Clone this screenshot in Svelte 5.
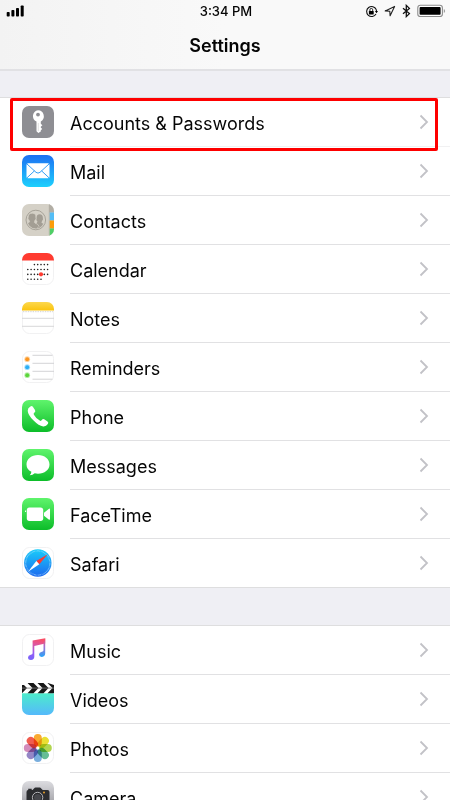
<script lang="ts">
  interface Item {
    id: string;
    label: string;
    highlighted?: boolean;
  }

  const groups: Item[][] = [
    [
      { id: 'accounts', label: 'Accounts & Passwords', highlighted: true },
      { id: 'mail', label: 'Mail' },
      { id: 'contacts', label: 'Contacts' },
      { id: 'calendar', label: 'Calendar' },
      { id: 'notes', label: 'Notes' },
      { id: 'reminders', label: 'Reminders' },
      { id: 'phone', label: 'Phone' },
      { id: 'messages', label: 'Messages' },
      { id: 'facetime', label: 'FaceTime' },
      { id: 'safari', label: 'Safari' }
    ],
    [
      { id: 'music', label: 'Music' },
      { id: 'videos', label: 'Videos' },
      { id: 'photos', label: 'Photos' },
      { id: 'camera', label: 'Camera' }
    ]
  ];

  const petals = ['#f9a11b', '#e8dc1c', '#a9d13c', '#55b68a', '#6aa5da', '#8a7ac0', '#cf7fb4', '#ef4a3c'];

  // Day dots of the calendar icon: [row, first column, last column]
  const weeks = [[0, 2, 6], [1, 0, 6], [2, 0, 6], [3, 0, 4]];
  const days = weeks.flatMap(([row, from, to]) =>
    Array.from({ length: to - from + 1 }, (_, i) => ({ x: 5.8 + (from + i) * 3.3, y: 11.6 + row * 4.9 }))
  );
</script>

<div class="screen">
  <header>
    <div class="status">
      <svg class="signal" width="20" height="12" viewBox="0 0 20 12" aria-hidden="true">
        <rect x="0.7" y="7" width="3" height="4.5" rx="0.8" />
        <rect x="5.4" y="5" width="3" height="6.5" rx="0.8" />
        <rect x="10" y="3" width="3" height="8.5" rx="0.8" />
        <rect x="14.7" y="0.5" width="3" height="11" rx="0.8" />
      </svg>
      <span class="time">3:34 PM</span>
      <div class="indicators">
        <svg width="13" height="13" viewBox="0 0 13 13" aria-hidden="true">
          <path d="M11.2 4.5A5 5 0 1 0 11 9M11.2 4.5l.4 2.2" fill="none" stroke="#111" stroke-width="1.1" />
          <path d="M9.9 6h3.1l-1.5 2.2z" />
          <rect x="3.9" y="6" width="4.8" height="3.4" rx="0.4" />
          <path d="M4.9 6V4.8a1.4 1.4 0 0 1 2.8 0V6" fill="none" stroke="#111" stroke-width="0.9" />
        </svg>
        <svg width="12" height="12" viewBox="0 0 12 12" aria-hidden="true">
          <path d="M10.6 1.4 1.2 5.9l4.6.3.3 4.5z" fill="none" stroke="#222" stroke-width="1.1" stroke-linejoin="round" />
        </svg>
        <svg width="9" height="14" viewBox="0 0 9 14" aria-hidden="true">
          <path d="M1 4.2l6.4 5.4L4.3 12.6V1.4l3.1 3L1 9.8" fill="none" stroke="#111" stroke-width="1.3" />
        </svg>
        <svg width="29" height="14" viewBox="0 0 29 14" aria-hidden="true">
          <rect x="0.8" y="1.3" width="24.6" height="11.2" rx="2.6" fill="#fff" stroke="#8c8c8c" stroke-width="1.1" />
          <rect x="2.6" y="3.1" width="21" height="7.6" rx="0.8" />
          <path d="M26.8 5v4q1.3-.6 1.3-2t-1.3-2z" fill="#999" />
        </svg>
      </div>
    </div>
    <h1>Settings</h1>
  </header>

  <main>
    {#each groups as group}
      <ul>
        {#each group as item}
          <li class:highlighted={item.highlighted}>
            <a href={`#${item.id}`}>
              <svg class="icon" viewBox="0 0 32 32" aria-hidden="true">
                {#if item.id === 'accounts'}
                  <rect width="32" height="32" rx="7" fill="#8e8e93" />
                  <path
                    d="M16 4.2a6 6 0 0 1 2.8 11.2v2.4l1.6 1.5-1.6 1.5v.8l1.4 1.4-1.4 1.3v1.2L16.4 27l-1.9-1.8v-9.6A6 6 0 0 1 16 4.2z"
                    fill="#fff"
                  />
                  <circle cx="16" cy="8.6" r="1.9" fill="#8e8e93" />
                  <path d="M16.3 17v8" stroke="#ccc" stroke-width="0.6" />
                {:else if item.id === 'mail'}
                  <linearGradient id="mail-bg" x2="0" y2="1">
                    <stop stop-color="#1d70f2" />
                    <stop offset="1" stop-color="#1dd0fd" />
                  </linearGradient>
                  <rect width="32" height="32" rx="7" fill="url(#mail-bg)" />
                  <rect x="4.5" y="8.3" width="23" height="15" rx="1.6" fill="#fff" />
                  <path
                    d="M5 9l9 8.3q2 1.6 4 0L27 9M5 22.8l7.5-7M27 22.8l-7.5-7"
                    fill="none"
                    stroke="#37a0f5"
                    stroke-width="1"
                  />
                {:else if item.id === 'contacts'}
                  <clipPath id="contacts-clip"><rect width="32" height="32" rx="7" /></clipPath>
                  <g clip-path="url(#contacts-clip)">
                    <rect width="32" height="32" fill="#d5d1c7" />
                    <rect x="27" width="5" height="8.5" fill="#b2aea5" />
                    <rect x="27.5" y="8.5" width="4.5" height="8" fill="#54bdf5" />
                    <rect x="27.5" y="16.5" width="4.5" height="8" fill="#fb9c09" />
                    <rect x="27.5" y="24.5" width="4.5" height="8" fill="#4ecf66" />
                    <path d="M27.2 0v32" stroke="#b5b1a8" stroke-width="0.7" />
                  </g>
                  <clipPath id="people-clip"><circle cx="13.8" cy="16" r="8.6" /></clipPath>
                  <g clip-path="url(#people-clip)" fill="#a39e94">
                    <path
                      d="M17.6 10.200c2.400 0 3.500 1.700 3.200 4 .5.800 0 2-.6 2.200-.2 1-.7 1.400-.7 2 0 1.200 3.500 1 4 3.600l-4 4h-6l1-6.500 1-2q-1.200-.6-1-2.200-.4-5.100 3.100-5.100z"
                    />
                    <path
                      d="M10.400 9.200c2.700 0 3.800 1.800 3.400 4.300.6.900-.1 2.200-.7 2.400-.2 1.100-.7 1.600-.7 2.300 0 1.500 4.100 1.200 4.600 4.200l-4.600 4.600-9-4v-2.400c1-1.400 3.700-1.500 4.200-2.800 0-.9-.6-1.100-.8-2.100-.9-.4-1-1.800-.5-2.400-.4-2.700.8-4.100 4.100-4.100z"
                      stroke="#d5d1c7"
                      stroke-width="0.7"
                    />
                  </g>
                  <circle cx="13.8" cy="16" r="9.8" fill="none" stroke="#a39e94" stroke-width="0.9" />
                {:else if item.id === 'calendar'}
                  <rect class="plate" x="0.5" y="0.5" width="31" height="31" rx="7" />
                  <path d="M0 7.4V7a7 7 0 0 1 7-7h18a7 7 0 0 1 7 7v.4z" fill="#ff3b30" />
                  {#each days as day}
                    <circle cx={day.x} cy={day.y} r="0.8" fill="#222" />
                  {/each}
                  <circle cx="19" cy="21.3" r="2.1" fill="#ff3b30" />
                {:else if item.id === 'notes'}
                  <rect class="plate" x="0.5" y="0.5" width="31" height="31" rx="7" />
                  <linearGradient id="notes-bg" x2="0" y2="1">
                    <stop stop-color="#fcd84e" />
                    <stop offset="1" stop-color="#fbc40e" />
                  </linearGradient>
                  <path d="M0 8.4V7a7 7 0 0 1 7-7h18a7 7 0 0 1 7 7v1.4z" fill="url(#notes-bg)" />
                  <path d="M1 9.7h30" stroke="#b9b9b9" stroke-width="0.8" stroke-dasharray="0.8 0.9" />
                  <path d="M0 16.3h32M0 24.3h32" stroke="#d2d2d4" stroke-width="0.9" />
                {:else if item.id === 'reminders'}
                  <rect class="plate" x="0.5" y="0.5" width="31" height="31" rx="7" />
                  <path d="M10.5 4.3h20M10.5 12.3H32M10.5 20.3H32M10.5 28.2h20" stroke="#cfcfd1" stroke-width="0.9" />
                  {#each ['#fb9520', '#2aaef5', '#5bd53a'] as color, i}
                    <circle cx="5.2" cy={8.2 + i * 8} r="2.9" fill={color} fill-opacity="0.4" />
                    <circle cx="5.2" cy={8.2 + i * 8} r="2" fill={color} />
                  {/each}
                {:else if item.id === 'phone' || item.id === 'messages' || item.id === 'facetime'}
                  <linearGradient id={`${item.id}-bg`} x2="0" y2="1">
                    <stop stop-color="#5ff46c" />
                    <stop offset="1" stop-color="#0cbd29" />
                  </linearGradient>
                  <rect width="32" height="32" rx="7" fill={`url(#${item.id}-bg)`} />
                  {#if item.id === 'phone'}
                    <path
                      d="M8.4 6.5q1.5-1.2 2.6.4l2 3.1q.9 1.5-.5 2.5-1.4.8-.6 2.2 2.3 4 5.8 5.9 1.4.8 2.1-.5.9-1.6 2.4-.8l3.3 2.2q1.5 1 .3 2.6-1.6 2.5-4.6 2.3-4.4-.4-9.6-5.8Q6 15.1 5.7 10.7 5.7 7.9 8.4 6.5z"
                      fill="#fff"
                    />
                  {:else if item.id === 'messages'}
                    <path
                      d="M16 6.1c6.5 0 11.5 4.1 11.5 9.3s-5 9.3-11.5 9.3q-1.7 0-3.3-.4-2 1.8-5 1.9 1.5-1.3 1.7-3.4Q4.5 20 4.5 15.4C4.5 10.2 9.5 6.1 16 6.1z"
                      fill="#fff"
                    />
                  {:else}
                    <rect x="4.8" y="9.5" width="16.4" height="13.4" rx="2.6" fill="#fff" />
                    <path d="M22 14.8l4.7-3.9q1.3-.8 1.3.4v9.8q0 1.2-1.3.4L22 17.7z" fill="#fff" />
                    <path d="M3.6 12.5v1.5" stroke="#fff" />
                  {/if}
                {:else if item.id === 'safari'}
                  <rect class="plate" x="0.5" y="0.5" width="31" height="31" rx="7" />
                  <linearGradient id="safari-bg" x2="0" y2="1">
                    <stop stop-color="#19cdfa" />
                    <stop offset="1" stop-color="#1d69ef" />
                  </linearGradient>
                  <circle cx="15.8" cy="16" r="13.7" fill="url(#safari-bg)" />
                  <circle
                    cx="15.8"
                    cy="16"
                    r="12.1"
                    fill="none"
                    stroke="#a8dcfb"
                    stroke-width="1.2"
                    stroke-dasharray="0.5 0.8"
                  />
                  <path d="M25.7 7.3 14.3 14l3 3.2z" fill="#fb3b30" />
                  <path d="M6.1 24.8 14.3 14l3 3.2z" fill="#fff" />
                {:else if item.id === 'music'}
                  <rect class="plate" x="0.5" y="0.5" width="31" height="31" rx="7" />
                  <linearGradient id="music-note" gradientUnits="userSpaceOnUse" x1="20" y1="5" x2="15" y2="26">
                    <stop stop-color="#fb4d63" />
                    <stop offset="0.3" stop-color="#e0559b" />
                    <stop offset="0.7" stop-color="#9a5cf3" />
                    <stop offset="1" stop-color="#7a63fa" />
                  </linearGradient>
                  <linearGradient id="music-stem" x2="0" y2="1">
                    <stop stop-color="#fb4d63" />
                    <stop offset="0.45" stop-color="#a56fd0" />
                    <stop offset="1" stop-color="#26a4fa" />
                  </linearGradient>
                  <path
                    d="M10.6 6.6 23.2 4.3v5.2l-10.9 2.4v10.6q0 3.3-3.4 3.6-2.8 0-2.9-2.5 0-2.3 2.8-2.8 1.8-.2 1.8-1.6z"
                    fill="url(#music-note)"
                  />
                  <path d="M21.5 9l1.7-4.7v14.9q0 3.2-3.3 3.7-2.8.1-2.9-2.4.1-2.4 2.9-2.8 1.6-.2 1.6-1.5z" fill="url(#music-stem)" />
                {:else if item.id === 'videos'}
                  <clipPath id="videos-clip"><path d="M0 2h3l3-2h20l6 2v23a7 7 0 0 1-7 7H7a7 7 0 0 1-7-7z" /></clipPath>
                  <linearGradient id="videos-bg" x2="0" y2="1">
                    <stop stop-color="#4ceccb" />
                    <stop offset="1" stop-color="#55b9fb" />
                  </linearGradient>
                  <g clip-path="url(#videos-clip)">
                    <rect width="32" height="32" fill="#fff" />
                    <rect y="10.3" width="32" height="21.7" fill="url(#videos-bg)" />
                    <path
                      d="M-5 0h5l5 5.1-5 5.1h-5zM5.5 0h6l5 5.1-5 5.1h-6l5-5.1zM15.5 0h6l5 5.1-5 5.1h-6l5-5.1zM25.5 0h6l5 5.1-5 5.1h-6l5-5.1z"
                      fill="#171717"
                    />
                    <path d="M0 5.1h32" stroke="#777" stroke-width="0.8" />
                  </g>
                {:else if item.id === 'photos'}
                  <rect class="plate" x="0.5" y="0.5" width="31" height="31" rx="7" />
                  {#each petals as color, i}
                    <rect
                      class="petal"
                      x="11.8"
                      y="2"
                      width="8"
                      height="12.5"
                      rx="4"
                      fill={color}
                      transform={`rotate(${i * 45} 15.8 16)`}
                    />
                  {/each}
                {:else}
                  <linearGradient id="camera-bg" x2="0" y2="1">
                    <stop stop-color="#dcdce0" />
                    <stop offset="1" stop-color="#8b8b90" />
                  </linearGradient>
                  <rect width="32" height="32" rx="7" fill="url(#camera-bg)" />
                  <path
                    d="M6.2 9V7.8h3.5V9h.8l1.5-1.6q.7-.8 1.5-.8h4.2q.9 0 1.5.8L20.7 9h4.8q2 0 2 2v12q0 2-2 2h-19q-2 0-2-2V11q0-2 1.7-2z"
                    fill="#2c2d30"
                  />
                  <circle cx="15.6" cy="16.5" r="5.2" fill="#292a2d" stroke="#c4c4c8" stroke-width="0.9" />
                  <circle cx="15.6" cy="16.5" r="3.6" fill="#46474c" />
                  <circle cx="22" cy="11.5" r="0.9" fill="#f6a82b" />
                {/if}
              </svg>
              <span class="cell">
                <span class="label">{item.label}</span>
                <svg class="chevron" width="10" height="16" viewBox="0 0 10 16" aria-hidden="true">
                  <path d="M1.5 1.5 8 8l-6.5 6.5" fill="none" stroke="#c2c2c7" stroke-width="1.8" />
                </svg>
              </span>
            </a>
          </li>
        {/each}
      </ul>
    {/each}
  </main>
</div>

<style>
  :global(body) {
    background: #efeff4;
  }

  .screen {
    height: 100vh;
    overflow-y: auto;
    scrollbar-width: none;
    font-family: Inter, 'Liberation Sans', sans-serif;
    color: #050505;
  }

  header {
    background: linear-gradient(90deg, #f3f3f3, #f9f9f9 50%);
    border-bottom: 2px solid #e1e1e4;
  }

  .status {
    display: grid;
    grid-template-columns: 1fr auto 1fr;
    align-items: center;
    height: 22px;
    padding: 0 4px 0 6px;
  }

  .time {
    font-size: 13px;
    font-weight: 500;
  }

  .indicators {
    display: flex;
    justify-content: flex-end;
    align-items: center;
    gap: 6px;
  }

  h1 {
    margin: 0;
    font-size: 18px;
    font-weight: 600;
    line-height: 47px;
    text-align: center;
  }

  ul {
    list-style: none;
    margin: 26px 0 0;
    padding: 0;
    background: #fff;
    border-top: 1px solid #dededf;
  }

  ul + ul {
    margin-top: 37px;
  }

  li {
    position: relative;
  }

  li:last-child {
    border-bottom: 1px solid #dededf;
  }

  .highlighted::after {
    content: '';
    position: absolute;
    inset: 0 12px -4px 10px;
    border: 3px solid #fe0000;
    border-radius: 2px;
    pointer-events: none;
  }

  a {
    display: flex;
    align-items: flex-start;
    gap: 16px;
    padding-left: 22px;
    color: inherit;
    text-decoration: none;
  }

  .icon {
    flex: none;
    width: 32px;
    height: 32px;
    margin-top: 8px;
  }

  .plate {
    fill: #fff;
    stroke: #f1f1f2;
  }

  .petal {
    mix-blend-mode: multiply;
    opacity: 0.9;
  }

  .cell {
    flex: 1;
    display: flex;
    align-items: center;
    justify-content: space-between;
    height: 48px;
    padding-right: 21px;
    border-bottom: 1px solid #e1e1e3;
  }

  .highlighted .cell {
    border-bottom-color: #f1f1f2;
  }

  li:last-child .cell {
    border-bottom: 0;
  }

  .label {
    padding-top: 3px;
    font-size: 18px;
    line-height: 24px;
  }
</style>
